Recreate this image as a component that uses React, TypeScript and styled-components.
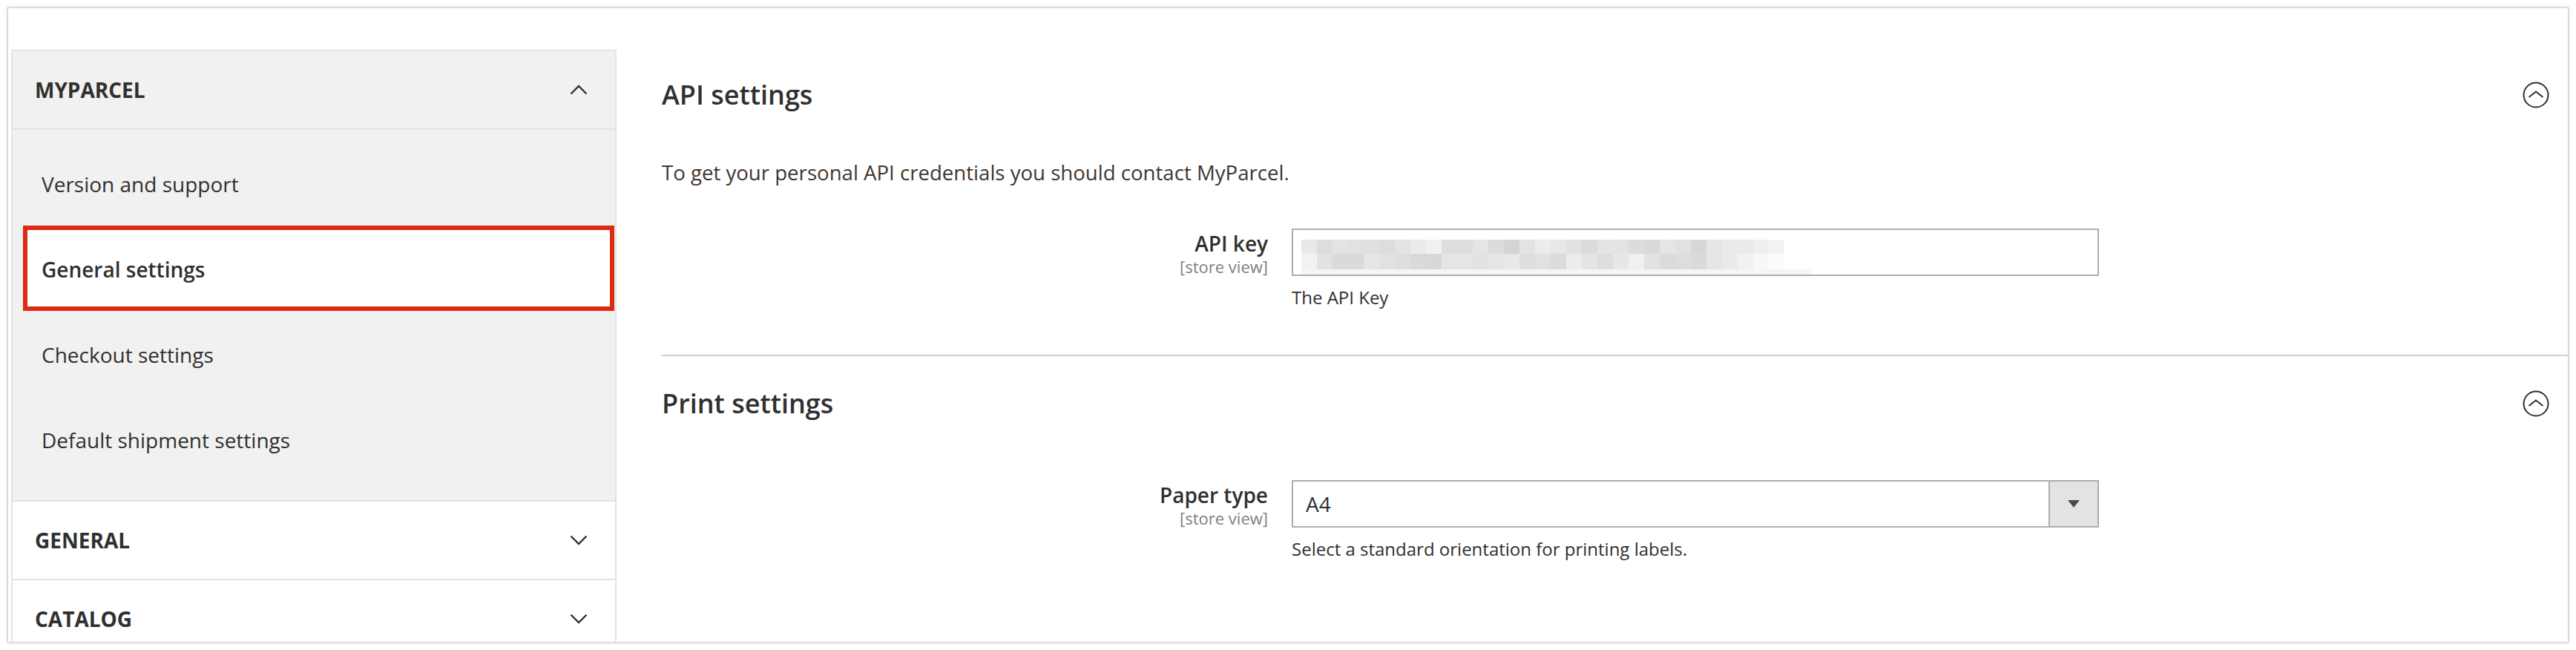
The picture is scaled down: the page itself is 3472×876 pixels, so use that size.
import React from "react";
import styled, { createGlobalStyle, css } from "styled-components";

const GlobalStyle = createGlobalStyle`
  html, body {
    margin: 0;
    padding: 0;
    background: #ffffff;
  }
  body {
    font-family: "Open Sans", "Liberation Sans", sans-serif;
    color: #303030;
  }
  * {
    box-sizing: border-box;
  }
`;

const Frame = styled.div`
  margin: 10px;
  width: 3452px;
  height: 856px;
  border: 1px solid #d2d2d2;
  box-shadow: 0 0 4px rgba(0, 0, 0, 0.22);
  display: flex;
  align-items: flex-start;
  padding-left: 4px;
  overflow: hidden;
`;

const Sidebar = styled.nav`
  width: 816px;
  flex-shrink: 0;
  margin-top: 56px;
  border: 2px solid #e3e3e3;
  border-bottom: none;
`;

const GroupHeader = styled.div<{ $open?: boolean }>`
  height: 106px;
  display: flex;
  align-items: center;
  justify-content: space-between;
  padding: 0 37px 0 30px;
  background: ${(p) => (p.$open ? "#f1f1f1" : "#ffffff")};
  border-bottom: 2px solid #e3e3e3;
  font-size: 28px;
  font-weight: 700;
  text-transform: uppercase;
  color: #303030;
`;

const SubList = styled.div`
  background: #f1f1f1;
  padding: 15px 0 24px;
  border-bottom: 2px solid #e3e3e3;
`;

const NavItem = styled.div<{ $active?: boolean }>`
  position: relative;
  height: 115px;
  display: flex;
  align-items: center;
  padding-left: 39px;
  font-size: 28px;
  color: #303030;
  font-weight: ${(p) => (p.$active ? 600 : 400)};

  span {
    position: relative;
  }

  ${(p) =>
    p.$active &&
    css`
      &::before {
        content: "";
        position: absolute;
        top: -1px;
        bottom: 1px;
        left: 14px;
        right: 1px;
        background: #ffffff;
        border: 6px solid #dc2b0f;
      }
    `}
`;

const Main = styled.main`
  flex: 1;
  padding: 53px 0 0 61px;
`;

const Section = styled.section<{ $divided?: boolean; $bottom?: number }>`
  padding-top: 24px;
  padding-bottom: ${(p) => p.$bottom ?? 0}px;
  border-top: ${(p) => (p.$divided ? "2px solid #cfcfcf" : "none")};
`;

const SectionHeader = styled.div`
  height: 80px;
  display: flex;
  align-items: center;
  justify-content: space-between;
  padding-right: 25px;
`;

const SectionTitle = styled.h2`
  margin: 0;
  font-size: 36px;
  font-weight: 600;
  line-height: 1.2;
  color: #303030;
`;

const Description = styled.p`
  margin: 44px 0 0;
  font-size: 27.6px;
  line-height: 40px;
  color: #41362f;
`;

const FieldRow = styled.div<{ $top: number }>`
  display: grid;
  grid-template-columns: 817px 1088px;
  column-gap: 32px;
  margin-top: ${(p) => p.$top}px;
`;

const LabelCol = styled.div`
  text-align: right;
  padding-top: 3px;
`;

const Label = styled.div`
  font-size: 28px;
  font-weight: 600;
  line-height: 34px;
  color: #303030;
`;

const Scope = styled.div`
  font-size: 22px;
  line-height: 28px;
  color: #808080;
`;

const TextInput = styled.div`
  height: 64px;
  border: 2px solid #adadad;
  background: #ffffff;
  display: flex;
  align-items: flex-start;
  padding: 13px 0 0 11px;
  overflow: hidden;
`;

const Select = styled.div`
  height: 64px;
  border: 2px solid #adadad;
  display: flex;
  background: #ffffff;
`;

const SelectValue = styled.div`
  flex: 1;
  display: flex;
  align-items: center;
  padding-left: 17px;
  font-size: 28px;
  color: #303030;
`;

const SelectArrow = styled.div`
  width: 66px;
  background: #e3e3e3;
  border-left: 2px solid #adadad;
  display: flex;
  align-items: center;
  justify-content: center;
`;

const Note = styled.div`
  margin-top: 12px;
  font-size: 24px;
  line-height: 34px;
  color: #303030;
`;

const Chevron = ({ up }: { up?: boolean }) => (
  <svg width="24" height="14" viewBox="0 0 24 14">
    <polyline
      points={up ? "1.5,12.5 12,2 22.5,12.5" : "1.5,1.5 12,12 22.5,1.5"}
      fill="none"
      stroke="#303030"
      strokeWidth="2.4"
    />
  </svg>
);

const CircleToggle = () => (
  <svg width="36" height="36" viewBox="0 0 36 36">
    <circle cx="18" cy="18" r="16.5" fill="none" stroke="#303030" strokeWidth="2" />
    <polyline points="8.5,21 18,13.5 27.5,21" fill="none" stroke="#303030" strokeWidth="2" />
  </svg>
);

// pixelated (blurred) api key
const row1 = [233, 221, 227, 225, 224, 221, 227, 235, 240, 221, 221, 229, 220, 212, 227, 236, 232, 226, 219, 228, 227, 220, 217, 229, 225, 215, 230, 234, 234, 239, 243];
const row2 = [242, 226, 218, 218, 230, 225, 222, 218, 216, 229, 229, 226, 230, 232, 222, 225, 220, 236, 228, 222, 231, 240, 226, 219, 221, 218, 230, 234, 241, 248, 252];

const shade = (v: number) => `rgb(${v},${v},${v})`;

const BlurredKey = () => (
  <svg width="690" height="47" viewBox="0 0 690 47">
    {row1.map((v, i) => (
      <rect key={`a${i}`} x={i * 21} y={0} width={21} height={19} fill={shade(v)} />
    ))}
    {row2.map((v, i) => (
      <rect key={`b${i}`} x={i * 21} y={19} width={21} height={21} fill={shade(v)} />
    ))}
    <rect x={0} y={40} width={686} height={7} fill="#f5f5f5" />
  </svg>
);

const SelectTriangle = () => (
  <svg width="16" height="10" viewBox="0 0 16 10">
    <polygon points="0,0 16,0 8,10" fill="#514943" />
  </svg>
);

const subItems = [
  "Version and support",
  "General settings",
  "Checkout settings",
  "Default shipment settings",
];

export default function App() {
  return (
    <>
      <GlobalStyle />
      <Frame>
        <Sidebar>
          <GroupHeader $open>
            MyParcel
            <Chevron up />
          </GroupHeader>
          <SubList>
            {subItems.map((item) => (
              <NavItem key={item} $active={item === "General settings"}>
                <span>{item}</span>
              </NavItem>
            ))}
          </SubList>
          <GroupHeader>
            General
            <Chevron />
          </GroupHeader>
          <GroupHeader>
            Catalog
            <Chevron />
          </GroupHeader>
        </Sidebar>

        <Main>
          <Section $bottom={60}>
            <SectionHeader>
              <SectionTitle>API settings</SectionTitle>
              <CircleToggle />
            </SectionHeader>
            <Description>To get your personal API credentials you should contact MyParcel.</Description>
            <FieldRow $top={56}>
              <LabelCol>
                <Label>API key</Label>
                <Scope>[store view]</Scope>
              </LabelCol>
              <div>
                <TextInput>
                  <BlurredKey />
                </TextInput>
                <Note>The API Key</Note>
              </div>
            </FieldRow>
          </Section>

          <Section $divided>
            <SectionHeader>
              <SectionTitle>Print settings</SectionTitle>
              <CircleToggle />
            </SectionHeader>
            <FieldRow $top={63}>
              <LabelCol>
                <Label>Paper type</Label>
                <Scope>[store view]</Scope>
              </LabelCol>
              <div>
                <Select>
                  <SelectValue>A4</SelectValue>
                  <SelectArrow>
                    <SelectTriangle />
                  </SelectArrow>
                </Select>
                <Note>Select a standard orientation for printing labels.</Note>
              </div>
            </FieldRow>
          </Section>
        </Main>
      </Frame>
    </>
  );
}
